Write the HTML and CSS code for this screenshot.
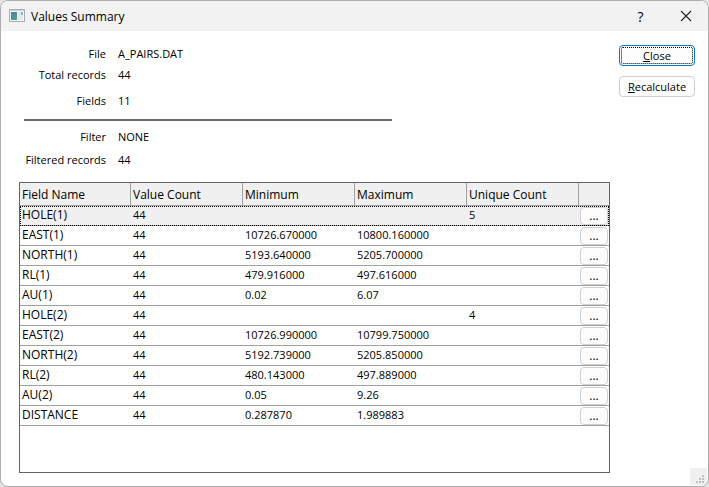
FILE: index.html
```
<!DOCTYPE html>
<html lang="en">
<head>
	<meta charset="UTF-8">
	<title>Values Summary</title>
	<link rel="stylesheet" href="styles.css">
</head>
<body>
	<div class="dialog">
		<div class="titlebar">
			<svg class="appIcon" width="16" height="14" viewBox="0 0 16 14">
				<defs>
					<linearGradient id="pane" x1="0" y1="0" x2="1" y2="1">
						<stop offset="0" stop-color="#4f7fa6"/>
						<stop offset="1" stop-color="#4fa583"/>
					</linearGradient>
				</defs>
				<rect x="0.5" y="0.5" width="15" height="12" fill="#f4f6f7" stroke="#a9adb3"/>
				<path d="M1 1.5h14" stroke="#c9d0da"/>
				<rect x="2" y="3" width="6" height="8" fill="url(#pane)"/>
				<rect x="9" y="3" width="3" height="8" fill="#e3e7ea"/>
				<rect x="12" y="3" width="2" height="3" fill="#8fb5d2"/>
				<rect x="12" y="6" width="2" height="5" fill="#dcefdf"/>
			</svg>
			<h1>Values Summary</h1>
			<button class="titleBtn" type="button" aria-label="Help">?</button>
			<button class="titleBtn" type="button" aria-label="Close window">
				<svg width="12" height="12" viewBox="0 0 12 12"><path d="M1 1l10 10M11 1L1 11" stroke="#222" stroke-width="1.1"/></svg>
			</button>
		</div>
		<div class="main">
			<div class="content">
				<dl class="info file">
					<dt>File</dt><dd>A_PAIRS.DAT</dd>
					<dt>Total records</dt><dd>44</dd>
					<dt class="fields">Fields</dt><dd class="fields">11</dd>
				</dl>
				<hr class="line">
				<dl class="info filter">
					<dt>Filter</dt><dd>NONE</dd>
					<dt>Filtered records</dt><dd>44</dd>
				</dl>
				<div class="list">
					<table>
						<colgroup>
							<col class="colName"><col class="colValue"><col class="colValue"><col class="colValue"><col class="colValue"><col>
						</colgroup>
						<thead>
							<tr><th>Field Name</th><th>Value Count</th><th>Minimum</th><th>Maximum</th><th>Unique Count</th><th></th></tr>
						</thead>
						<tbody>
							<tr class="selected"><td class="name">HOLE(1)</td><td>44</td><td></td><td></td><td>5</td><td class="act"><button class="more" type="button">...</button></td></tr>
							<tr><td class="name">EAST(1)</td><td>44</td><td>10726.670000</td><td>10800.160000</td><td></td><td class="act"><button class="more" type="button">...</button></td></tr>
							<tr><td class="name">NORTH(1)</td><td>44</td><td>5193.640000</td><td>5205.700000</td><td></td><td class="act"><button class="more" type="button">...</button></td></tr>
							<tr><td class="name">RL(1)</td><td>44</td><td>479.916000</td><td>497.616000</td><td></td><td class="act"><button class="more" type="button">...</button></td></tr>
							<tr><td class="name">AU(1)</td><td>44</td><td>0.02</td><td>6.07</td><td></td><td class="act"><button class="more" type="button">...</button></td></tr>
							<tr><td class="name">HOLE(2)</td><td>44</td><td></td><td></td><td>4</td><td class="act"><button class="more" type="button">...</button></td></tr>
							<tr><td class="name">EAST(2)</td><td>44</td><td>10726.990000</td><td>10799.750000</td><td></td><td class="act"><button class="more" type="button">...</button></td></tr>
							<tr><td class="name">NORTH(2)</td><td>44</td><td>5192.739000</td><td>5205.850000</td><td></td><td class="act"><button class="more" type="button">...</button></td></tr>
							<tr><td class="name">RL(2)</td><td>44</td><td>480.143000</td><td>497.889000</td><td></td><td class="act"><button class="more" type="button">...</button></td></tr>
							<tr><td class="name">AU(2)</td><td>44</td><td>0.05</td><td>9.26</td><td></td><td class="act"><button class="more" type="button">...</button></td></tr>
							<tr><td class="name">DISTANCE</td><td>44</td><td>0.287870</td><td>1.989883</td><td></td><td class="act"><button class="more" type="button">...</button></td></tr>
						</tbody>
					</table>
				</div>
			</div>
			<div class="buttons">
				<button class="btn focused" type="button"><u>C</u>lose</button>
				<button class="btn" type="button"><u>R</u>ecalculate</button>
			</div>
		</div>
		<svg class="grip" width="17" height="17" viewBox="0 0 17 17">
			<path fill="#bfbfbf" d="M12 7h2v2h-2zM12 10h2v2h-2zM9 10h2v2h-2zM12 13h2v2h-2zM9 13h2v2h-2zM6 13h2v2h-2z"/>
		</svg>
	</div>
</body>
</html>
```
FILE: styles.css
```
*{
	margin: 0;
	padding: 0;
	box-sizing: border-box;
}
body{
	background: #e4e4e4;
	font-family: "Open Sans", "Noto Sans", sans-serif;
	font-size: 11px;
	color: #000;
}
button{
	font: inherit;
	color: inherit;
}
.dialog{
	position: relative;
	display: flex;
	flex-direction: column;
	min-height: 100vh;
	overflow: hidden;
	border: 1px solid #adadad;
	border-radius: 8px;
	background: #fff;
}

/* title bar */
.titlebar{
	display: flex;
	align-items: center;
	height: 30px;
	padding-left: 8px;
	background: #f2f2f2;
}
.titlebar h1{
	flex: 1;
	margin-left: 6px;
	font-size: 12px;
	font-weight: normal;
}
.titleBtn{
	display: flex;
	align-items: center;
	justify-content: center;
	width: 45px;
	height: 30px;
	border: none;
	background: transparent;
	font-size: 14px;
}

.main{
	flex: 1;
	display: flex;
	gap: 9px;
	padding: 0 13px 13px 18px;
}
.content{
	flex: 1;
	display: flex;
	flex-direction: column;
}

/* file details */
.info{
	display: grid;
	grid-template-columns: 87px 1fr;
	column-gap: 12px;
	line-height: 16px;
}
.info dt{
	text-align: right;
	white-space: nowrap;
}
.file{
	padding: 15px 0 10px;
	row-gap: 5px;
}
.file .fields{
	margin-top: 5px;
}
.filter{
	padding: 8px 0 14px;
	row-gap: 7px;
}
.line{
	width: 368px;
	margin-left: 5px;
	border: none;
	border-top: 2px solid #696969;
}

/* field list */
.list{
	flex: 1;
	border: 1px solid #646464;
}
table{
	width: 100%;
	table-layout: fixed;
	border-collapse: separate;
	border-spacing: 0;
}
.colName{
	width: 111px;
}
.colValue{
	width: 112px;
}
th{
	height: 23px;
	padding-left: 2px;
	border-right: 1px solid #a0a0a0;
	border-bottom: 1px solid #a0a0a0;
	background: #f0f0f0;
	font-size: 12px;
	font-weight: normal;
	text-align: left;
}
th:last-child{
	border-right: none;
}
td{
	height: 20px;
	padding: 0 0 1px 2px;
	border-bottom: 1px solid #a0a0a0;
	line-height: 18px;
}
.name{
	font-size: 12px;
}
.selected{
	background: #f0f0f0;
	outline: 1px dotted #000;
	outline-offset: -1px;
}
.act{
	padding: 1px 1px 0;
}
.more{
	display: block;
	width: 100%;
	height: 18px;
	border: 1px solid #d0d0d0;
	border-radius: 4px;
	background: #fdfdfd;
	font-size: 12px;
	line-height: 16px;
}

/* right side */
.buttons{
	display: flex;
	flex-direction: column;
	gap: 10px;
	width: 76px;
	padding-top: 14px;
}
.btn{
	height: 21px;
	border: 1px solid #d0d0d0;
	border-radius: 4px;
	background: #fdfdfd;
}
.focused{
	border-color: #0078d4;
	outline: 1px dotted #000;
	outline-offset: -3px;
}
.grip{
	position: absolute;
	right: 1px;
	bottom: 1px;
	background: #f0f0f0;
}
```
